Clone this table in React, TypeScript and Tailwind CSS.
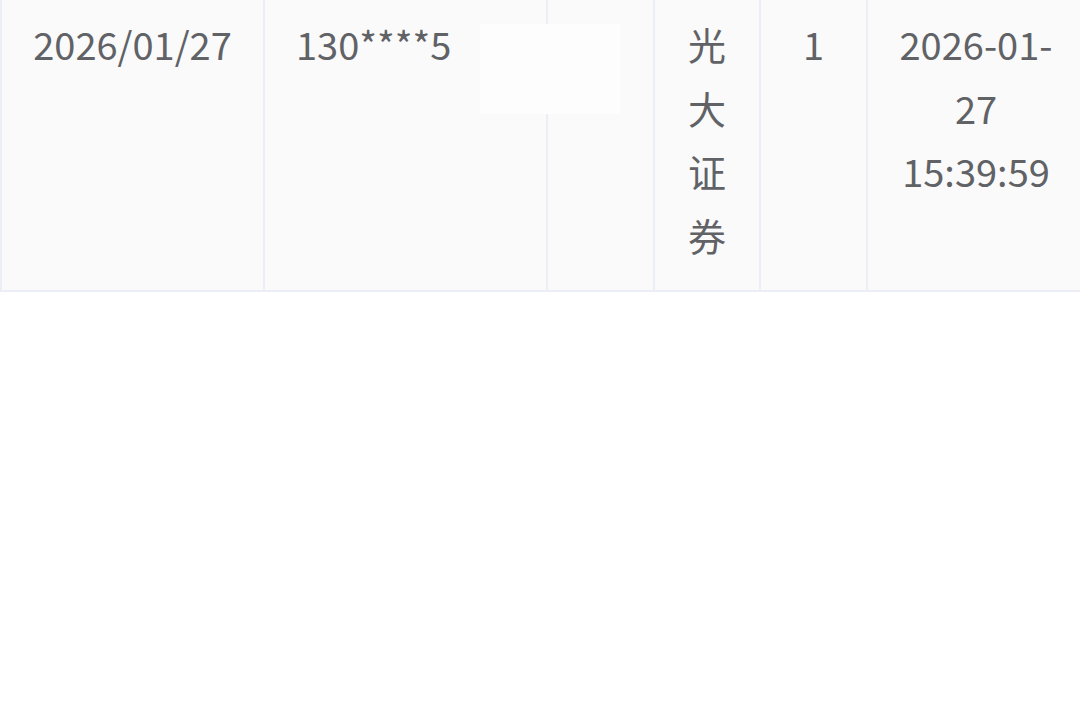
const row = {
  date: '2026/01/27',
  phone: '130****5',
  broker: '光大证券',
  count: '1',
  time: '2026-01-27 15:39:59',
}

export default function App() {
  return (
    <div
      className="relative w-[1080px] h-[701px] overflow-hidden bg-white text-[#606266]"
      style={{ fontFamily: '"Noto Sans CJK SC", "Noto Sans", sans-serif' }}
    >
      <div className="grid w-[1084px] h-[292px] grid-cols-[265px_283px_107px_106px_107px_216px] border-b-2 border-[#ebeef5] bg-[#fafafa] text-[38px] leading-[63.5px]">
        <div className="border-l-2 border-r-2 border-[#ebeef5] pt-[12px] text-center">{row.date}</div>
        <div className="border-r-2 border-[#ebeef5] pt-[12px] pl-[31px]">{row.phone}</div>
        <div className="border-r-2 border-[#ebeef5] pt-[12px]" />
        <div className="border-r-2 border-[#ebeef5] pt-[12px] px-[20px] text-center">{row.broker}</div>
        <div className="border-r-2 border-[#ebeef5] pt-[12px] text-center">{row.count}</div>
        <div className="pt-[12px] px-[20px] text-center">{row.time}</div>
      </div>
      {/* redacted patch */}
      <div className="absolute left-[480px] top-[24px] w-[140px] h-[90px] bg-[#fdfdfd]" />
    </div>
  )
}
